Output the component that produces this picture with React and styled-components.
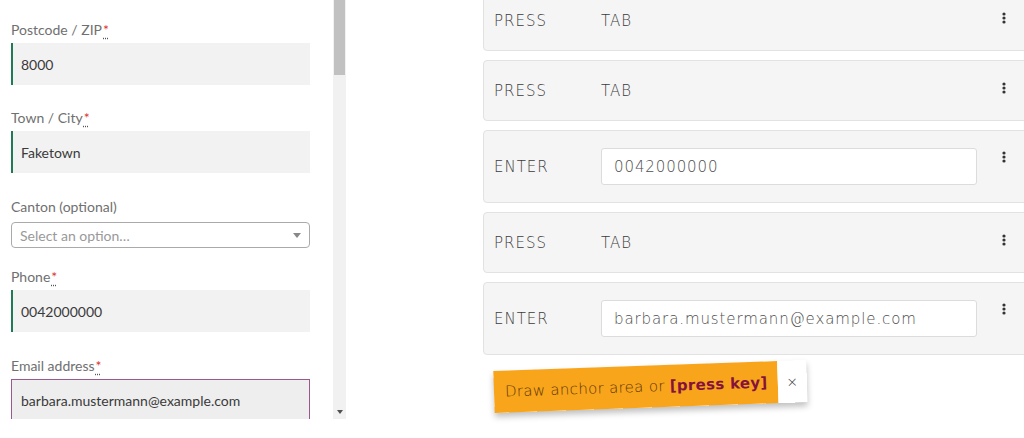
import React from "react";
import styled, { createGlobalStyle } from "styled-components";

const GlobalStyle = createGlobalStyle`
  html, body {
    margin: 0;
    padding: 0;
    background: #ffffff;
    overflow: hidden;
  }
`;

const Page = styled.div`
  display: flex;
  flex-direction: row;
  width: 1024px;
  height: 438px;
  overflow: hidden;
  background: #fff;
`;

/* ---------- left: checkout form ---------- */
const FormPane = styled.div`
  display: flex;
  flex-direction: row;
  height: 419px;
  flex-shrink: 0;
`;
const FormColumn = styled.div`
  width: 333px;
  padding: 20px 0 0 11px;
  box-sizing: border-box;
  overflow: hidden;
  font-family: Lato, "Liberation Sans", sans-serif;
`;
const Field = styled.div`
  display: flex;
  flex-direction: column;
  width: 299px;
  margin-bottom: ${(p) => p.$gap || 0}px;
`;
const Label = styled.label`
  font-size: 14px;
  line-height: 20px;
  color: #707070;
  margin-bottom: ${(p) => (p.$tight ? 5 : 3)}px;
`;
const Required = styled.abbr`
  color: #d33;
  margin-left: 1px;
  text-decoration: underline dotted #555;
  text-underline-offset: 3px;
`;
const TextInput = styled.div`
  height: 42px;
  box-sizing: border-box;
  display: flex;
  align-items: center;
  background: ${(p) => (p.$focused ? "#eeeeee" : "#f2f2f2")};
  border-left: 2px solid #1f7a55;
  padding-left: 8px;
  font-size: 14px;
  color: #3a3a3a;
  ${(p) =>
    p.$focused &&
    `
    border: 1px solid #99598f;
    padding-left: 9px;
  `}
`;
const Select = styled.div`
  height: 26px;
  box-sizing: border-box;
  display: flex;
  align-items: center;
  justify-content: space-between;
  border: 1px solid #aaaaaa;
  border-radius: 4px;
  padding: 0 8px 0 8px;
  font-size: 14px;
  color: #999;
  background: #fff;
`;
const Caret = styled.span`
  width: 0;
  height: 0;
  border-left: 4px solid transparent;
  border-right: 4px solid transparent;
  border-top: 5px solid #888;
`;

const Scrollbar = styled.div`
  width: 13px;
  background: #f1f1f1;
  display: flex;
  flex-direction: column;
  align-items: center;
`;
const Thumb = styled.div`
  width: 11px;
  height: 75px;
  background: #c1c1c1;
`;
const ScrollArrow = styled.span`
  margin-top: auto;
  margin-bottom: 5px;
  width: 0;
  height: 0;
  border-left: 3px solid transparent;
  border-right: 3px solid transparent;
  border-top: 4px solid #505050;
`;

/* ---------- right: recorded steps ---------- */
const StepPane = styled.div`
  display: flex;
  flex-direction: column;
  gap: 9px;
  margin-left: 137px;
  margin-top: -10px;
  font-family: "DejaVu Sans", Verdana, sans-serif;
  font-weight: 300;
`;
const Card = styled.div`
  display: flex;
  flex-direction: row;
  align-items: center;
  width: 560px;
  height: ${(p) => (p.$tall ? 73 : 61)}px;
  box-sizing: border-box;
  background: #f5f5f5;
  border: 1px solid #e2e2e2;
  border-radius: 4px;
  padding-left: 10px;
`;
const Action = styled.span`
  width: 107px;
  font-size: 15px;
  letter-spacing: 1px;
  color: #3c3c3c;
`;
const Value = styled.span`
  width: 376px;
  font-size: 15px;
  letter-spacing: 1px;
  color: #3c3c3c;
`;
const ValueInput = styled.div`
  width: 376px;
  height: 37px;
  box-sizing: border-box;
  display: flex;
  align-items: center;
  padding-left: 12px;
  background: #fff;
  border: 1px solid #dcdcdc;
  border-radius: 3px;
  font-size: 15px;
  letter-spacing: 0.9px;
  color: #4e4e4e;
`;
const Menu = styled.div`
  align-self: flex-start;
  width: 54px;
  padding-top: ${(p) => (p.$tall ? 20 : 21)}px;
  display: flex;
  justify-content: center;
`;

const Toast = styled.div`
  display: flex;
  flex-direction: row;
  align-self: flex-start;
  margin: 7px 0 0 11px;
  transform: rotate(-2deg);
  transform-origin: left center;
  box-shadow: 0 4px 6px rgba(0, 0, 0, 0.25);
  font-family: "DejaVu Sans", Verdana, sans-serif;
  font-weight: 300;
`;
const ToastText = styled.div`
  height: 42px;
  display: flex;
  align-items: center;
  padding: 0 10px 0 11px;
  background: #f8a51c;
  font-size: 15px;
  letter-spacing: 0.3px;
  color: #5e3608;
  white-space: pre;
  & b {
    font-weight: 700;
    color: #86123c;
  }
`;
const ToastClose = styled.div`
  width: 29px;
  display: flex;
  align-items: center;
  justify-content: center;
  background: #fff;
  color: #444;
  font-size: 14px;
`;

const Dots = () => (
  <svg width="4" height="12" viewBox="0 0 4 12">
    <circle cx="2" cy="2" r="1.6" fill="#333" />
    <circle cx="2" cy="6" r="1.6" fill="#333" />
    <circle cx="2" cy="10" r="1.6" fill="#333" />
  </svg>
);

const steps = [
  { action: "PRESS", value: "TAB" },
  { action: "PRESS", value: "TAB" },
  { action: "ENTER", input: "0042000000" },
  { action: "PRESS", value: "TAB" },
  { action: "ENTER", input: "barbara.mustermann@example.com" },
];

const Req = () => <Required title="required">*</Required>;

export default function App() {
  return (
    <Page>
      <GlobalStyle />
      <FormPane>
        <FormColumn>
          <Field $gap={23}>
            <Label>
              Postcode / ZIP<Req />
            </Label>
            <TextInput>8000</TextInput>
          </Field>
          <Field $gap={24}>
            <Label>
              Town / City<Req />
            </Label>
            <TextInput>Faketown</TextInput>
          </Field>
          <Field $gap={19}>
            <Label $tight>Canton (optional)</Label>
            <Select>
              Select an option…
              <Caret />
            </Select>
          </Field>
          <Field $gap={24}>
            <Label>
              Phone<Req />
            </Label>
            <TextInput>0042000000</TextInput>
          </Field>
          <Field>
            <Label>
              Email address<Req />
            </Label>
            <TextInput $focused>barbara.mustermann@example.com</TextInput>
          </Field>
        </FormColumn>
        <Scrollbar>
          <Thumb />
          <ScrollArrow />
        </Scrollbar>
      </FormPane>

      <StepPane>
        {steps.map((s, i) => (
          <Card key={i} $tall={!!s.input}>
            <Action>{s.action}</Action>
            {s.input ? <ValueInput>{s.input}</ValueInput> : <Value>{s.value}</Value>}
            <Menu $tall={!!s.input}>
              <Dots />
            </Menu>
          </Card>
        ))}
        <Toast>
          <ToastText>
            Draw anchor area or <b>[press key]</b>
          </ToastText>
          <ToastClose>×</ToastClose>
        </Toast>
      </StepPane>
    </Page>
  );
}
